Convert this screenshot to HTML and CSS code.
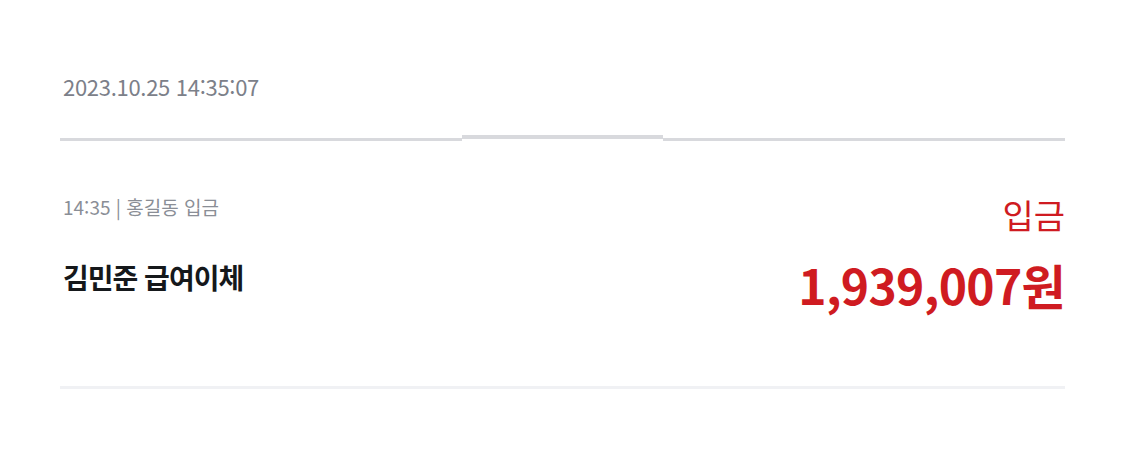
FILE: index.html
```html
<!DOCTYPE html>
<html lang="ko">
<head>
  <meta charset="UTF-8">
  <title>거래내역</title>
  <link rel="stylesheet" href="styles.css">
</head>
<body>
  <div class="page">
    <div class="head">2023.10.25 14:35:07</div>

    <div class="rule">
      <span class="seg"></span>
      <span class="seg seg-mid"></span>
      <span class="seg"></span>
    </div>

    <div class="item">
      <div class="item-left">
        <div class="meta">14:35 | 홍길동 입금</div>
        <div class="name">김민준 급여이체</div>
      </div>
      <div class="item-right">
        <div class="kind">입금</div>
        <div class="amount">1,939,007원</div>
      </div>
    </div>

    <div class="bottom-rule"></div>
  </div>
</body>
</html>
```

FILE: styles.css
```css
body { margin: 0; background: #fff; font-family: "Noto Sans CJK KR", "Noto Sans", sans-serif; }
.page { padding: 0 60px; }

.head { height: 135px; display: flex; align-items: center; padding: 37px 0 0 3px; box-sizing: border-box; font-size: 22px; color: #7c8089; letter-spacing: -0.3px; }

.rule { display: flex; align-items: flex-start; height: 6px; }
.seg { flex: 2; height: 3px; margin-top: 3px; background: #d8d9dd; }
.seg-mid { flex: 1; height: 4px; margin-top: 0; }

.item { display: flex; justify-content: space-between; height: 245px; box-sizing: border-box; padding-top: 52px; }
.item-left { padding-left: 3px; }
.meta { font-size: 19px; line-height: 28px; color: #8a8e96; }
.name { margin-top: 36px; font-size: 28px; line-height: 40px; font-weight: 700; color: #15181b; letter-spacing: -1px; }

.item-right { text-align: right; }
.kind { font-size: 34px; line-height: 44px; color: #cf1b21; }
.amount { margin-top: 17px; font-size: 48px; line-height: 60px; font-weight: 700; color: #cf1b21; letter-spacing: -0.7px; }

.bottom-rule { height: 3px; background: #f0f1f4; }
```
